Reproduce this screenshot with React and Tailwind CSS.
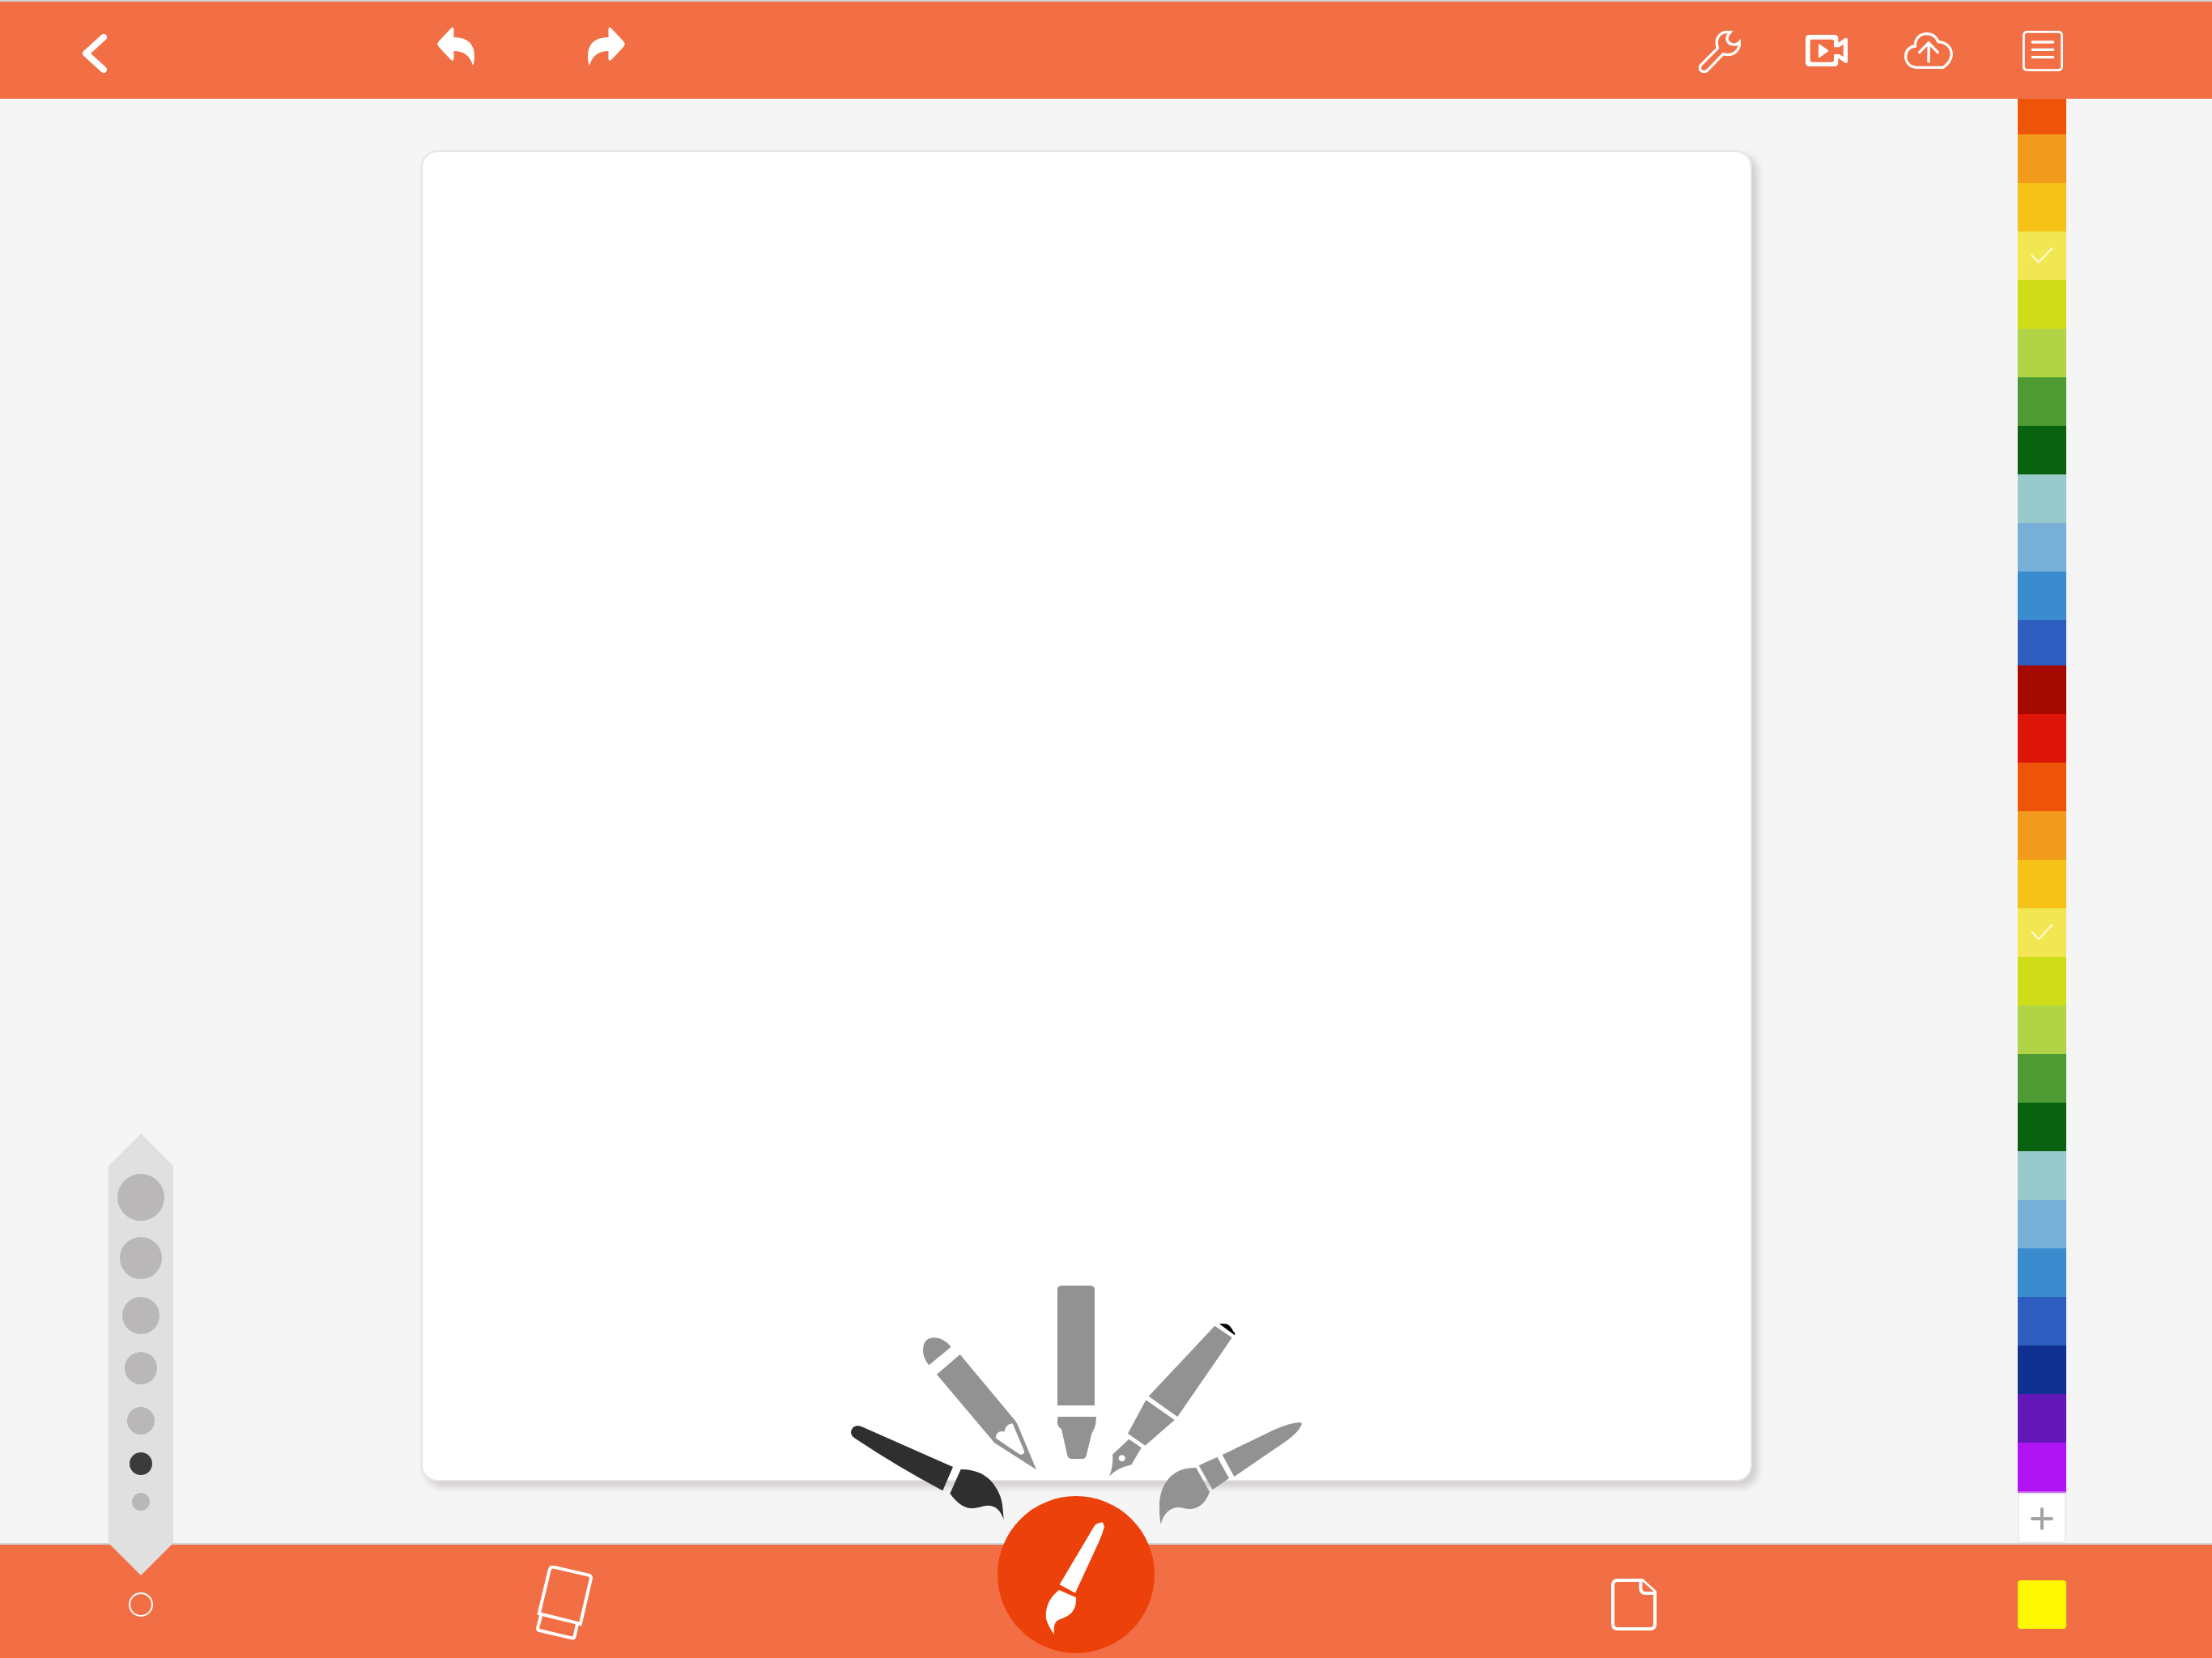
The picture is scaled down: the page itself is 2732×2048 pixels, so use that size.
import React from "react";

const UPPER_COLORS = [
  { name: "Orange", tone: "bg-[#ee5508]" },
  { name: "Amber", tone: "bg-[#f19a1b]" },
  { name: "Gold", tone: "bg-[#f7c217]" },
  { name: "Yellow", tone: "bg-[#f2e752]", selected: true },
  { name: "Lime", tone: "bg-[#cfdd18]" },
  { name: "Light green", tone: "bg-[#b0d445]" },
  { name: "Green", tone: "bg-[#4f9b33]" },
  { name: "Dark green", tone: "bg-[#09620f]" },
  { name: "Teal", tone: "bg-[#99cacb]" },
  { name: "Sky", tone: "bg-[#78afd8]" },
  { name: "Blue", tone: "bg-[#3a8cce]" },
  { name: "Royal blue", tone: "bg-[#2d5ebf]" },
];

const LOWER_COLORS = [
  { name: "Dark red", tone: "bg-[#a40900]" },
  { name: "Red", tone: "bg-[#dc1508]" },
  ...UPPER_COLORS,
  { name: "Navy", tone: "bg-[#10318f]" },
  { name: "Purple", tone: "bg-[#6317b8]" },
  { name: "Violet", tone: "bg-[#b114f3]" },
];

const SIZES = [
  { label: "Size 7", box: "size-[58px]" },
  { label: "Size 6", box: "size-[52px] mt-5" },
  { label: "Size 5", box: "size-[46px] mt-[22px]" },
  { label: "Size 4", box: "size-[40px] mt-[22px]" },
  { label: "Size 3", box: "size-[34px] mt-7" },
  { label: "Size 2", box: "size-[28px] mt-[22px]" },
  { label: "Size 1", box: "size-[22px] mt-[22px]" },
];

const FAN = [
  {
    label: "Brush",
    place: "left-0 top-[173px]",
    size: "w-[189px] h-[116px]",
    viewBox: "33 363 567 348",
    tone: "text-[#2f2f2f]",
    active: true,
    shape: (
      <>
        <path d="M58 363Q66 363 92 375L411 516L373 604Q200 512 45 408Q33 399 33 387Q36 365 58 363Z" />
        <path d="M440 525Q520 524 563 581Q592 622 595 665L599 711Q582 660 542 659C520 659 505 670 475 669Q435 664 400 614Z" />
      </>
    ),
  },
  {
    label: "Pencil",
    place: "left-[89px] top-[64px]",
    size: "w-[140px] h-[163px]",
    viewBox: "300 35 420 489",
    tone: "text-[#929292]",
    shape: (
      <>
        <path d="M322 138Q300 112 300 82Q301 36 342 36Q377 37 404 70Z" />
        <path
          fillRule="evenodd"
          d="M437 98L637 338Q647 350 651 360L720 525L572 430Q562 424 556 415L351 172ZM569 408Q572 384 590 383L602 384Q603 358 632 354L675 456Q677 468 664 469Q660 469 655 466Z"
        />
      </>
    ),
  },
  {
    label: "Marker",
    place: "left-[255px] top-0",
    size: "w-[48px] h-[214px]",
    viewBox: "198 24 144 642",
    tone: "text-[#929292]",
    shape: (
      <>
        <path d="M198 38Q199 25 213 24H321Q335 25 336 38V468H198Z" />
        <path d="M199 510H342L339 540Q336 552 325 572L306 650Q303 666 290 666H252Q238 666 235 654L213 556Q198 545 198 533Z" />
      </>
    ),
  },
  {
    label: "Fountain pen",
    place: "left-[319px] top-[47px]",
    size: "w-[156px] h-[188px]",
    viewBox: "30 30 468 564",
    tone: "text-[#929292]",
    shape: (
      <>
        <path className="text-black" fill="currentColor" d="M438 31C456 29 468 30 476 38C484 46 486 54 494 63Q497 69 495 73Z" />
        <path d="M421 38L485 82L283 375L176 299Z" />
        <path d="M166 313L272 387L163 482L99 437Z" />
        <path
          fillRule="evenodd"
          d="M103 458L149 490L112 553Q60 565 30 595Q46 560 42 515ZM77 517a12 12 0 1 0 0.1 0Z"
        />
      </>
    ),
  },
  {
    label: "Watercolor brush",
    place: "left-[381px] top-[169px]",
    size: "w-[176px] h-[126px]",
    viewBox: "216 396 528 378",
    tone: "text-[#929292]",
    shape: (
      <>
        <path d="M449 516L640 424Q700 397 735 396Q746 397 743 404Q730 435 676 472L493 597Z" />
        <path d="M362 556L430 524L474 603L413 645Z" />
        <path d="M352 564L402 654Q378 717 326 717C305 715 300 710 280 711Q235 718 221 774Q207 690 228 640Q262 562 352 564Z" />
      </>
    ),
  },
];

function Swatch({ color, className = "" }) {
  return (
    <li className={className}>
      <button
        type="button"
        aria-label={color.name}
        className={"flex h-15 w-15 items-center justify-center " + color.tone}
      >
        {color.selected && (
          <svg viewBox="0 0 28 20" className="mb-0.5 h-5 w-7" fill="none" stroke="#fffbe0" strokeWidth="2">
            <path d="M1 10L10 19L27 1" />
          </svg>
        )}
      </button>
    </li>
  );
}

function CurvedArrow() {
  return (
    <path d="M540 54Q541 53 542 51L557 35Q560 32 560.500 36V46Q586 46 586 70Q586 77 584 81Q579 63 560.500 63V73Q560 76 557 74L542 58Q541 56 540 54Z" />
  );
}

function Header() {
  return (
    <header className="flex h-[122px] shrink-0 items-center justify-between border-t-2 border-[#ccd5d9] bg-[#f26f45] pr-46 pl-[102px] text-white">
      <div className="flex items-center">
        <button type="button" aria-label="Back" className="mt-2">
          <svg viewBox="102 42 30 48" className="h-12 w-[30px]" fill="none" stroke="currentColor" strokeWidth="8" strokeLinecap="round" strokeLinejoin="round">
            <path d="M128 46L106 66L128 86" />
          </svg>
        </button>
        <button type="button" aria-label="Undo" className="mb-2 ml-102">
          <svg viewBox="540 34 46 48" className="h-12 w-[46px]" fill="currentColor">
            <CurvedArrow />
          </svg>
        </button>
        <button type="button" aria-label="Redo" className="mb-2 ml-35">
          <svg viewBox="540 34 46 48" className="h-12 w-[46px] -scale-x-100" fill="currentColor">
            <CurvedArrow />
          </svg>
        </button>
      </div>
      <div className="flex items-center">
        <button type="button" aria-label="Settings" className="mt-1">
          <svg viewBox="54 54 156 156" className="size-13" fill="none" stroke="currentColor" strokeWidth="10">
            <path d="M171 59C140 54 119 73 121 103L124 119L63 180Q54 192 62 201Q76 212 88 199L145 140Q166 147 185 137Q206 124 206 96C193 110 168 108 160 90Q156 73 171 59Z" />
          </svg>
        </button>
        <button type="button" aria-label="Play recording" className="ml-20">
          <svg viewBox="450 66 156 117" className="h-[39px] w-13" fill="currentColor">
            <path
              fillRule="evenodd"
              d="M464 66H557Q571 66 571 80V95L595 79Q606 76 606 84V165Q605 174 597 170L571 152V169Q571 183 557 183H464Q450 183 450 169V80Q450 66 464 66ZM475 83Q467 83 467 91V158Q467 167 475 167H547Q555 167 555 158V138H575L590 148V101L575 112H555V91Q555 83 547 83Z"
            />
            <path d="M498 101Q499 98 503 101L533 122Q536 125 533 128L503 149Q499 152 498 149Z" />
          </svg>
        </button>
        <button type="button" aria-label="Upload" className="ml-[70px]">
          <svg viewBox="816 60 180 135" className="h-[45px] w-[60px]" fill="none" stroke="currentColor" strokeWidth="10">
            <path d="M856 111C855 82 874 65 900 65Q930 66 942 95C973 97 991 117 991 143Q989 170 960 190H862C836 188 821 172 821 148Q823 115 856 111Z" />
            <path d="M906 168V98M872 134L906 99L940 134" strokeLinecap="round" strokeLinejoin="round" />
          </svg>
        </button>
        <button type="button" aria-label="Layers list" className="mt-0.5 ml-[86px]">
          <svg viewBox="1254 54 150 150" className="size-[50px]" fill="none" stroke="currentColor" strokeWidth="9">
            <rect x="1258" y="58" width="142" height="142" rx="14" />
            <path d="M1291 96H1367M1291 124H1367M1291 152H1367" strokeWidth="10" strokeLinecap="round" />
          </svg>
        </button>
      </div>
    </header>
  );
}

function SizePicker() {
  return (
    <fieldset className="z-10 -mb-10 flex h-[546px] w-20 flex-col items-center bg-[#e0e0e0] pt-[50px] [clip-path:polygon(50%_0,100%_40px,100%_506px,50%_100%,0_506px,0_40px)]">
      {SIZES.map((size) => (
        <input
          key={size.label}
          type="radio"
          name="brush-size"
          aria-label={size.label}
          defaultChecked={size.label === "Size 2"}
          className={"shrink-0 appearance-none rounded-full bg-[#b9b7b8] checked:bg-[#3b3b3b] " + size.box}
        />
      ))}
    </fieldset>
  );
}

function Palette() {
  return (
    <aside aria-label="Colors" className="flex w-15 flex-col">
      <ul className="h-[700px] shrink-0 overflow-hidden">
        {UPPER_COLORS.map((color, i) => (
          <Swatch key={color.name} color={color} className={i === 0 ? "-mt-4" : ""} />
        ))}
      </ul>
      <ul className="shrink-0 border-b-2 border-[#cf66f2]">
        {LOWER_COLORS.map((color) => (
          <Swatch key={color.name} color={color} />
        ))}
      </ul>
      <button type="button" aria-label="Add color" className="flex h-[62px] items-center justify-center border-2 border-[#ececec] bg-white pt-0.5">
        <svg viewBox="0 0 28 28" className="size-7" stroke="#a3a2a1" strokeWidth="4" strokeLinecap="round">
          <path d="M14 2V26M2 14H26" />
        </svg>
      </button>
    </aside>
  );
}

function Footer() {
  return (
    <footer className="grid h-[142px] shrink-0 grid-cols-[348fr_698fr_566fr_812fr_196fr] items-center justify-items-center border-t-2 border-[#ccd5d9] bg-[#f26f45] pr-28 text-white">
      <button type="button" aria-label="Brush size" className="mt-2 size-[30px] rounded-full border-2 border-white" />
      <button type="button" aria-label="Eraser" className="mt-1">
        <svg viewBox="67 402 210 276" className="h-[92px] w-[70px]" fill="none" stroke="currentColor" strokeWidth="12">
          <path d="M77 585L117 418Q121 405 132 407L262 437Q273 440 270 452L230 624" />
          <path d="M77 579L230 617" />
          <path d="M86 584L74 630Q72 640 80 642L200 670Q208 671 210 664L220 618" />
        </svg>
      </button>
      <div className="relative flex h-35 flex-col items-center justify-end pb-1.5">
        <button type="button" aria-label="Current tool: brush" className="flex size-[194px] shrink-0 items-center justify-center rounded-full bg-[#ec410a] pt-2 pr-1">
          <svg viewBox="153 900 219 417" className="h-[139px] w-[73px]" fill="currentColor">
            <path d="M345 906L366 901Q368 910 372 918Q365 945 350 977L264 1163L206 1132L333 918Q338 909 345 906Z" />
            <path d="M204 1152L267 1180Q270 1225 240 1245C215 1261 205 1258 193 1270Q182 1285 186 1317Q160 1280 156 1257Q150 1195 204 1152Z" />
          </svg>
        </button>
        <div role="group" aria-label="Tools" className="pointer-events-none absolute bottom-[165px] left-1/2 h-[295px] w-[556px] -translate-x-1/2">
          {FAN.map((tool) => (
            <button
              key={tool.label}
              type="button"
              aria-label={tool.label}
              aria-pressed={Boolean(tool.active)}
              className={"pointer-events-auto absolute " + tool.place + " " + tool.tone}
            >
              <svg viewBox={tool.viewBox} fill="currentColor" className={tool.size}>
                {tool.shape}
              </svg>
            </button>
          ))}
        </div>
      </div>
      <button type="button" aria-label="New page" className="mt-2">
        <svg viewBox="150 510 168 192" className="h-16 w-14" fill="none" stroke="currentColor" strokeWidth="12">
          <path d="M266 516H174Q156 516 156 534V678Q156 696 174 696H294Q312 696 312 678V558" />
          <path d="M259 516V545Q259 564 278 564H312" />
          <path d="M264 513L315 559" strokeWidth="8" />
        </svg>
      </button>
      <button type="button" aria-label="Current color" className="mt-2 size-15 rounded-sm bg-[#fff800]" />
    </footer>
  );
}

export default function App() {
  return (
    <div className="flex min-h-screen flex-col bg-[#f5f5f5] font-['Liberation_Sans',sans-serif]">
      <Header />
      <main className="flex flex-1">
        <div className="flex w-[520px] shrink-0 items-end pl-[134px]">
          <SizePicker />
        </div>
        <section
          aria-label="Drawing canvas"
          className="mt-16 mb-19 flex-1 rounded-[20px] border-2 border-[#e8e4e5] bg-white shadow-[6px_6px_10px_1px_#d2cecf]"
        />
        <div className="flex w-[568px] shrink-0 justify-end pr-45">
          <Palette />
        </div>
      </main>
      <Footer />
    </div>
  );
}
